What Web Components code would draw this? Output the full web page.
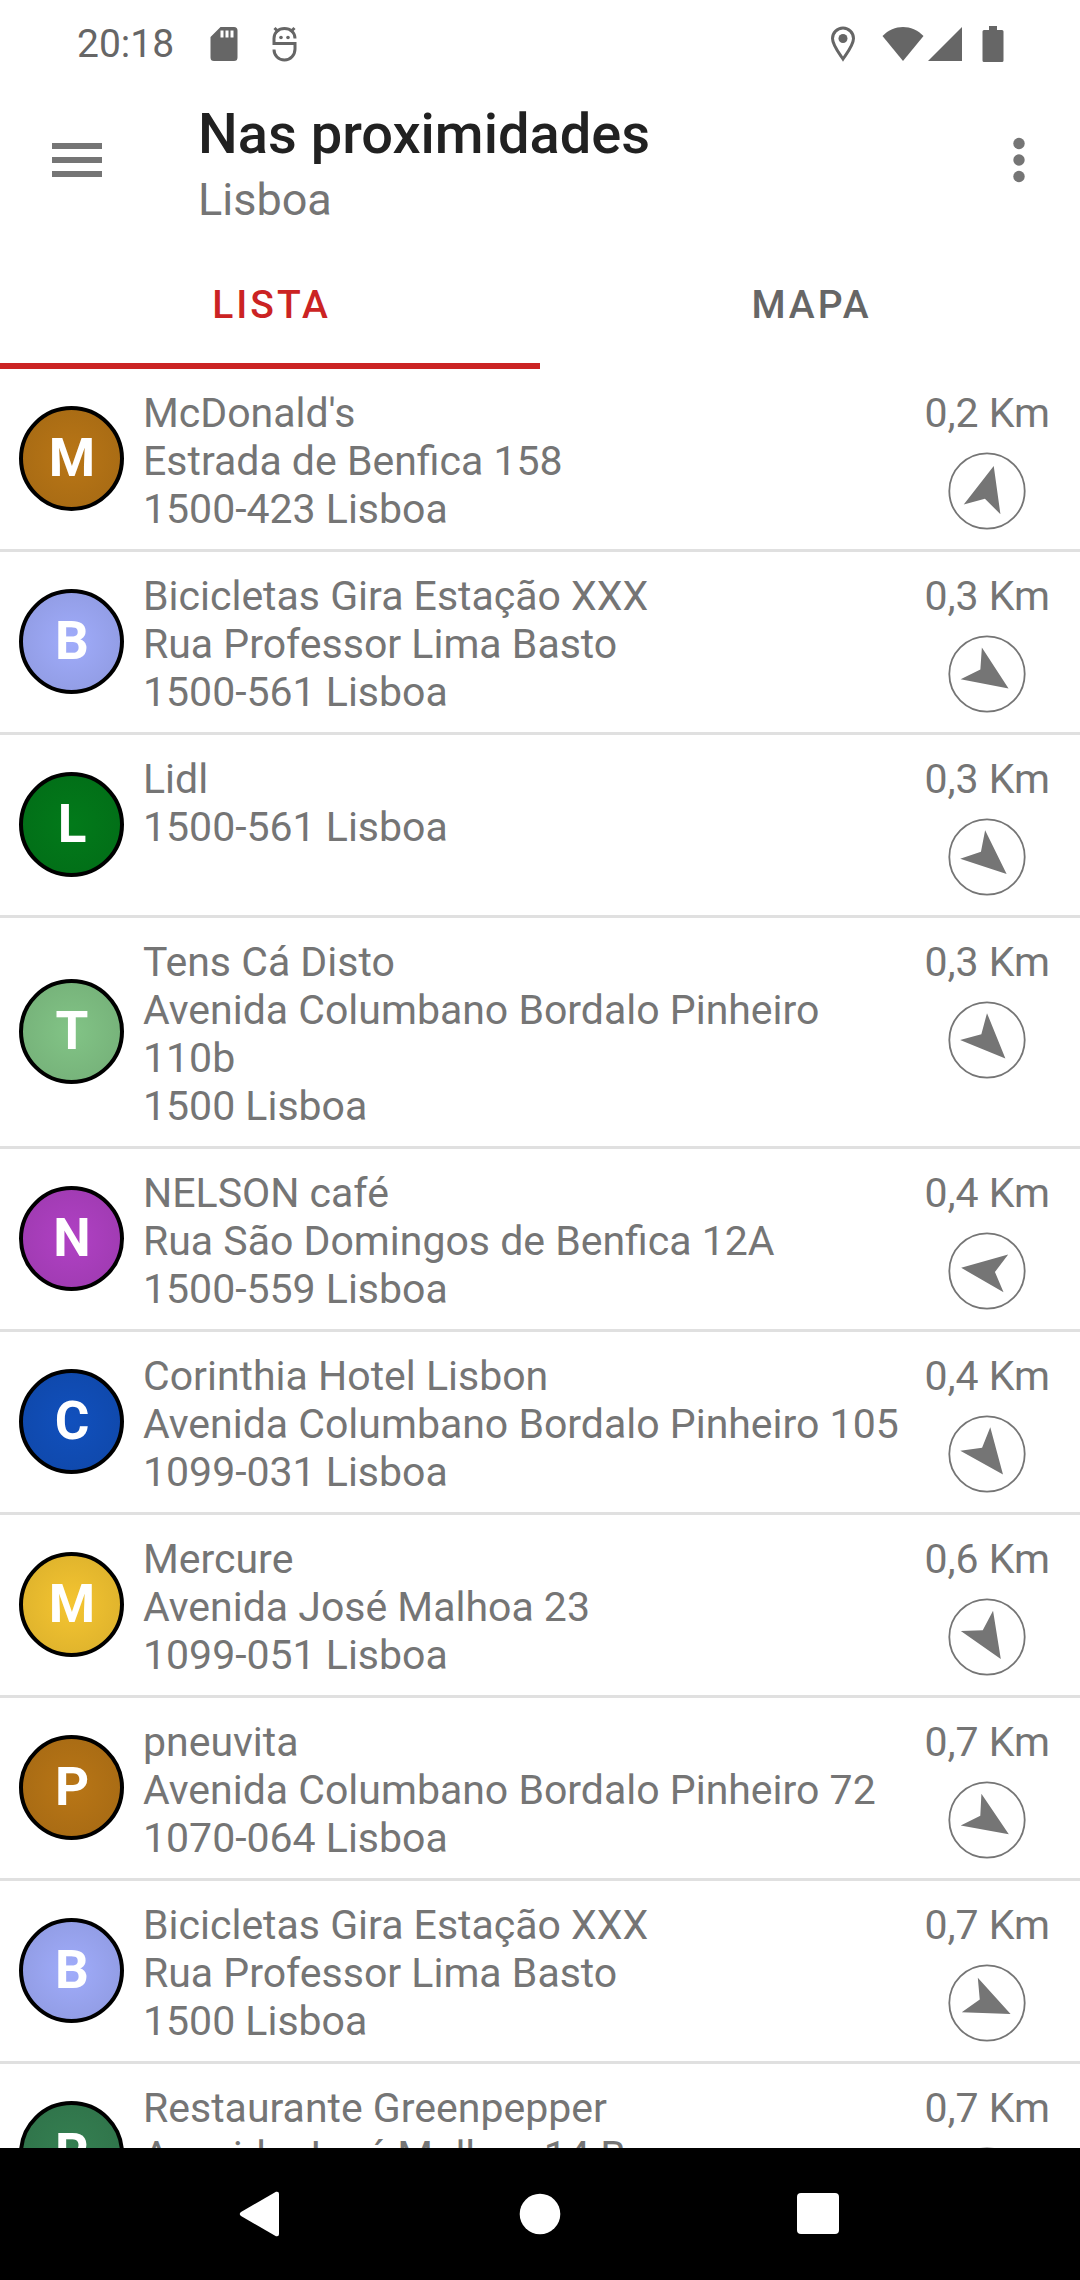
<!DOCTYPE html>
<html lang="pt">
<head>
<meta charset="utf-8">
<meta name="viewport" content="width=device-width, initial-scale=1">
<title>Nas proximidades</title>
<style>
  html, body { height: 100%; }
  body { margin: 0; background: #fff; font-family: Roboto, "Noto Sans", sans-serif; color: #757575; }
</style>
</head>
<body>
<nearby-app>
  <status-bar slot="status">20:18</status-bar>
  <app-toolbar slot="toolbar">
    <span slot="title">Nas proximidades</span>
    <span slot="subtitle">Lisboa</span>
  </app-toolbar>
  <tab-strip slot="tabs">
    <tab-item selected>LISTA</tab-item>
    <tab-item>MAPA</tab-item>
  </tab-strip>

  <place-row initial="M" color="#b97616" bearing="15">
    <span slot="name">McDonald's</span><span slot="street">Estrada de Benfica 158</span><span slot="city">1500-423 Lisboa</span><span slot="distance">0,2 Km</span>
  </place-row>
  <place-row initial="B" color="#a0acfb" bearing="124">
    <span slot="name">Bicicletas Gira Estação XXX</span><span slot="street">Rua Professor Lima Basto</span><span slot="city">1500-561 Lisboa</span><span slot="distance">0,3 Km</span>
  </place-row>
  <place-row initial="L" color="#027a1a" bearing="131">
    <span slot="name">Lidl</span><span slot="city">1500-561 Lisboa</span><span slot="distance">0,3 Km</span>
  </place-row>
  <place-row initial="T" color="#82c486" bearing="135">
    <span slot="name">Tens Cá Disto</span><span slot="street">Avenida Columbano Bordalo Pinheiro 110b</span><span slot="city">1500 Lisboa</span><span slot="distance">0,3 Km</span>
  </place-row>
  <place-row initial="N" color="#b041c4" bearing="277">
    <span slot="name">NELSON café</span><span slot="street">Rua São Domingos de Benfica 12A</span><span slot="city">1500-559 Lisboa</span><span slot="distance">0,4 Km</span>
  </place-row>
  <place-row initial="C" color="#1150bd" bearing="142">
    <span slot="name">Corinthia Hotel Lisbon</span><span slot="street">Avenida Columbano Bordalo Pinheiro 105</span><span slot="city">1099-031 Lisboa</span><span slot="distance">0,4 Km</span>
  </place-row>
  <place-row initial="M" color="#f5c531" bearing="148">
    <span slot="name">Mercure</span><span slot="street">Avenida José Malhoa 23</span><span slot="city">1099-051 Lisboa</span><span slot="distance">0,6 Km</span>
  </place-row>
  <place-row initial="P" color="#b97616" bearing="123">
    <span slot="name">pneuvita</span><span slot="street">Avenida Columbano Bordalo Pinheiro 72</span><span slot="city">1070-064 Lisboa</span><span slot="distance">0,7 Km</span>
  </place-row>
  <place-row initial="B" color="#a0acfb" bearing="115">
    <span slot="name">Bicicletas Gira Estação XXX</span><span slot="street">Rua Professor Lima Basto</span><span slot="city">1500 Lisboa</span><span slot="distance">0,7 Km</span>
  </place-row>
  <place-row initial="R" color="#358052" bearing="140">
    <span slot="name">Restaurante Greenpepper</span><span slot="street">Avenida José Malhoa 14 B</span><span slot="distance">0,7 Km</span>
  </place-row>

  <system-nav slot="nav"></system-nav>
</nearby-app>

<script>
const define = (name, html, setup) => {
  const template = document.createElement('template');
  template.innerHTML = html;
  customElements.define(name, class extends HTMLElement {
    connectedCallback() {
      if (this.shadowRoot) return;
      const root = this.attachShadow({ mode: 'open' });
      root.append(template.content.cloneNode(true));
      if (setup) setup(this, root);
    }
  });
};

define('nearby-app', `
  <style>
    :host { display: flex; flex-direction: column; height: 100vh; overflow: hidden; background: #fff; }
    main { flex: 1; min-height: 0; overflow-y: auto; scrollbar-width: none; }
  </style>
  <slot name="status"></slot>
  <slot name="toolbar"></slot>
  <slot name="tabs"></slot>
  <main role="list"><slot></slot></main>
  <slot name="nav"></slot>`);

define('status-bar', `
  <style>
    :host { display: flex; align-items: center; height: 83px; padding: 5px 76px 0 77px; font-size: 39px; line-height: 48px; color: #666; box-sizing: border-box; }
    .left, .right { display: flex; align-items: center; }
    .left { margin-left: 36px; gap: 34px; }
    .right { margin-left: auto; }
    svg { display: block; fill: #666; }
    .pin { margin-right: 26px; }
    .signal { margin: 0 20px 0 4px; }
  </style>
  <slot></slot>
  <div class="left">
    <svg width="28" height="36" viewBox="0 0 28 36" aria-hidden="true"><path fill-rule="evenodd" d="M10.500 1H24a3.500 3.500 0 0 1 3.500 3.500v27A3.500 3.500 0 0 1 24 35H4a3.500 3.500 0 0 1-3.500-3.500V11ZM10.500 4.500v7h3v-7Zm5 0v7h3v-7Zm5 0v7h3v-7Z"/></svg>
    <svg width="25" height="36" viewBox="0 0 25 36" aria-hidden="true"><g fill="none" stroke="#666" stroke-width="3"><path d="M23 12.500C23 6.500 18.500 2.500 12.500 2.500S2 6.500 2 12.500v5h21v5.500c0 6-4.500 11-10.500 11S2 29.500 2 23.500"/><path d="M2.500 2l4 4M22.500 2l-4 4"/></g><circle cx="9" cy="11.500" r="1.800"/><circle cx="16" cy="11.500" r="1.800"/></svg>
  </div>
  <div class="right">
    <svg class="pin" width="26" height="36" viewBox="0 0 26 36" aria-hidden="true"><path fill="none" stroke="#666" stroke-width="3" d="M13 33C9 27 2.500 19 2.500 12.500a10.500 10.500 0 0 1 21 0C23.500 19 17 27 13 33Z"/><circle cx="13" cy="12.500" r="4.500"/></svg>
    <svg width="42" height="36" viewBox="0 0 42 36" aria-hidden="true"><path d="M.500 10C12-2 30-2 41.500 10L21 35Z"/></svg>
    <svg class="signal" width="34" height="36" viewBox="0 0 34 36" aria-hidden="true"><path d="M34 1v34H0Z"/></svg>
    <svg width="22" height="36" viewBox="0 0 22 36" aria-hidden="true"><path d="M7 0h8v4h5a1.500 1.500 0 0 1 1.500 1.500v29A1.500 1.500 0 0 1 20 36H2A1.500 1.500 0 0 1 .500 34.500v-29A1.500 1.500 0 0 1 2 4h5Z"/></svg>
  </div>`);

define('app-toolbar', `
  <style>
    :host { display: flex; align-items: center; height: 154px; }
    button { all: unset; display: flex; align-items: center; justify-content: center; height: 100%; cursor: pointer; }
    .menu { width: 154px; }
    .more { width: 122px; }
    svg { display: block; fill: #757575; }
    .titles { flex: 1; margin-left: 44px; padding-top: 16px; }
    h1 { margin: 0; font-size: 56px; line-height: 64px; font-weight: 500; color: #212121; }
    p { margin: 0; font-size: 45px; line-height: 68px; }
  </style>
  <button class="menu" aria-label="Menu"><svg width="50" height="34" viewBox="0 0 50 34"><path d="M0 0h50v6H0zM0 14h50v6H0zM0 28h50v6H0z"/></svg></button>
  <div class="titles"><h1><slot name="title"></slot></h1><p><slot name="subtitle"></slot></p></div>
  <button class="more" aria-label="Mais"><svg width="12" height="46" viewBox="0 0 12 46"><circle cx="6" cy="6.500" r="5.700"/><circle cx="6" cy="23" r="5.700"/><circle cx="6" cy="39.500" r="5.700"/></svg></button>`);

define('tab-strip', `
  <style>:host { display: flex; height: 132px; }</style>
  <slot></slot>`, host => host.setAttribute('role', 'tablist'));

define('tab-item', `
  <style>
    :host { display: block; flex: 1; }
    button { all: unset; display: flex; align-items: center; justify-content: center; box-sizing: border-box; width: 100%; height: 100%; padding: 10px 0 0 3px; border-bottom: 6px solid transparent; font-size: 39px; font-weight: 500; letter-spacing: 3px; color: #666; cursor: pointer; }
    :host([selected]) button { color: #cb2323; border-color: #cb2323; }
  </style>
  <button role="tab"><slot></slot></button>`, (host, root) =>
    root.querySelector('button').setAttribute('aria-selected', host.hasAttribute('selected')));

define('place-avatar', `
  <style>
    :host { display: flex; align-items: center; justify-content: center; box-sizing: border-box; width: 105px; height: 105px; border: 4px solid #000; border-radius: 50%; background: radial-gradient(circle, var(--tint), color-mix(in srgb, var(--tint), #000 10%) 80%); background-origin: border-box; color: #fff; font-size: 53px; line-height: 60px; font-weight: 700; padding-left: 1px; }
  </style>
  <slot></slot>`);

define('bearing-dial', `
  <style>
    :host { display: block; width: 78px; height: 78px; }
    svg { display: block; fill: #757575; }
  </style>
  <svg width="78" height="78" viewBox="-39 -39 78 78" aria-hidden="true"><circle r="37.700" fill="none" stroke="#757575" stroke-width="1.800"/><path d="M0-26L19 19L0 8L-19 19Z"/></svg>`,
  (host, root) => root.querySelector('path').setAttribute('transform', 'rotate(' + host.getAttribute('bearing') + ')'));

define('place-row', `
  <style>
    :host { display: flex; gap: 19px; min-height: 180px; padding: 0 30px 0 19px; border-bottom: 3px solid #e0e0e0; font-size: 41px; line-height: 48px; }
    place-avatar { align-self: center; flex: none; margin-bottom: 2px; }
    .text { flex: 1; min-width: 0; padding: 20px 0 16px; margin-right: -10px; }
    .text ::slotted(*) { display: block; }
    .side { display: flex; flex-direction: column; align-items: center; gap: 15px; flex: none; padding-top: 20px; }
  </style>
  <place-avatar></place-avatar>
  <div class="text"><slot name="name"></slot><slot name="street"></slot><slot name="city"></slot></div>
  <div class="side"><slot name="distance"></slot><bearing-dial></bearing-dial></div>`,
  (host, root) => {
    host.setAttribute('role', 'listitem');
    const avatar = root.querySelector('place-avatar');
    avatar.textContent = host.getAttribute('initial');
    avatar.style.setProperty('--tint', host.getAttribute('color'));
    const dial = root.querySelector('bearing-dial');
    dial.setAttribute('bearing', host.getAttribute('bearing'));
    const arrow = dial.shadowRoot && dial.shadowRoot.querySelector('path');
    if (arrow) arrow.setAttribute('transform', 'rotate(' + host.getAttribute('bearing') + ')');
  });

define('system-nav', `
  <style>
    :host { display: flex; align-items: center; justify-content: center; height: 132px; background: #000; flex: none; }
    button { all: unset; display: flex; align-items: center; justify-content: center; width: 278px; height: 100%; cursor: pointer; }
    svg { display: block; fill: #fff; }
  </style>
  <button aria-label="Voltar"><svg width="46" height="46" viewBox="0 0 46 46"><path d="M37 .800Q40 0 40 3v40q0 3-3 2.200L2 25Q-.500 23 2 21Z"/></svg></button>
  <button aria-label="Início"><svg width="42" height="42" viewBox="0 0 42 42"><circle cx="21" cy="21" r="20.300"/></svg></button>
  <button aria-label="Recentes"><svg width="42" height="42" viewBox="0 0 42 42"><rect width="42" height="41" rx="4"/></svg></button>`);
</script>
</body>
</html>
